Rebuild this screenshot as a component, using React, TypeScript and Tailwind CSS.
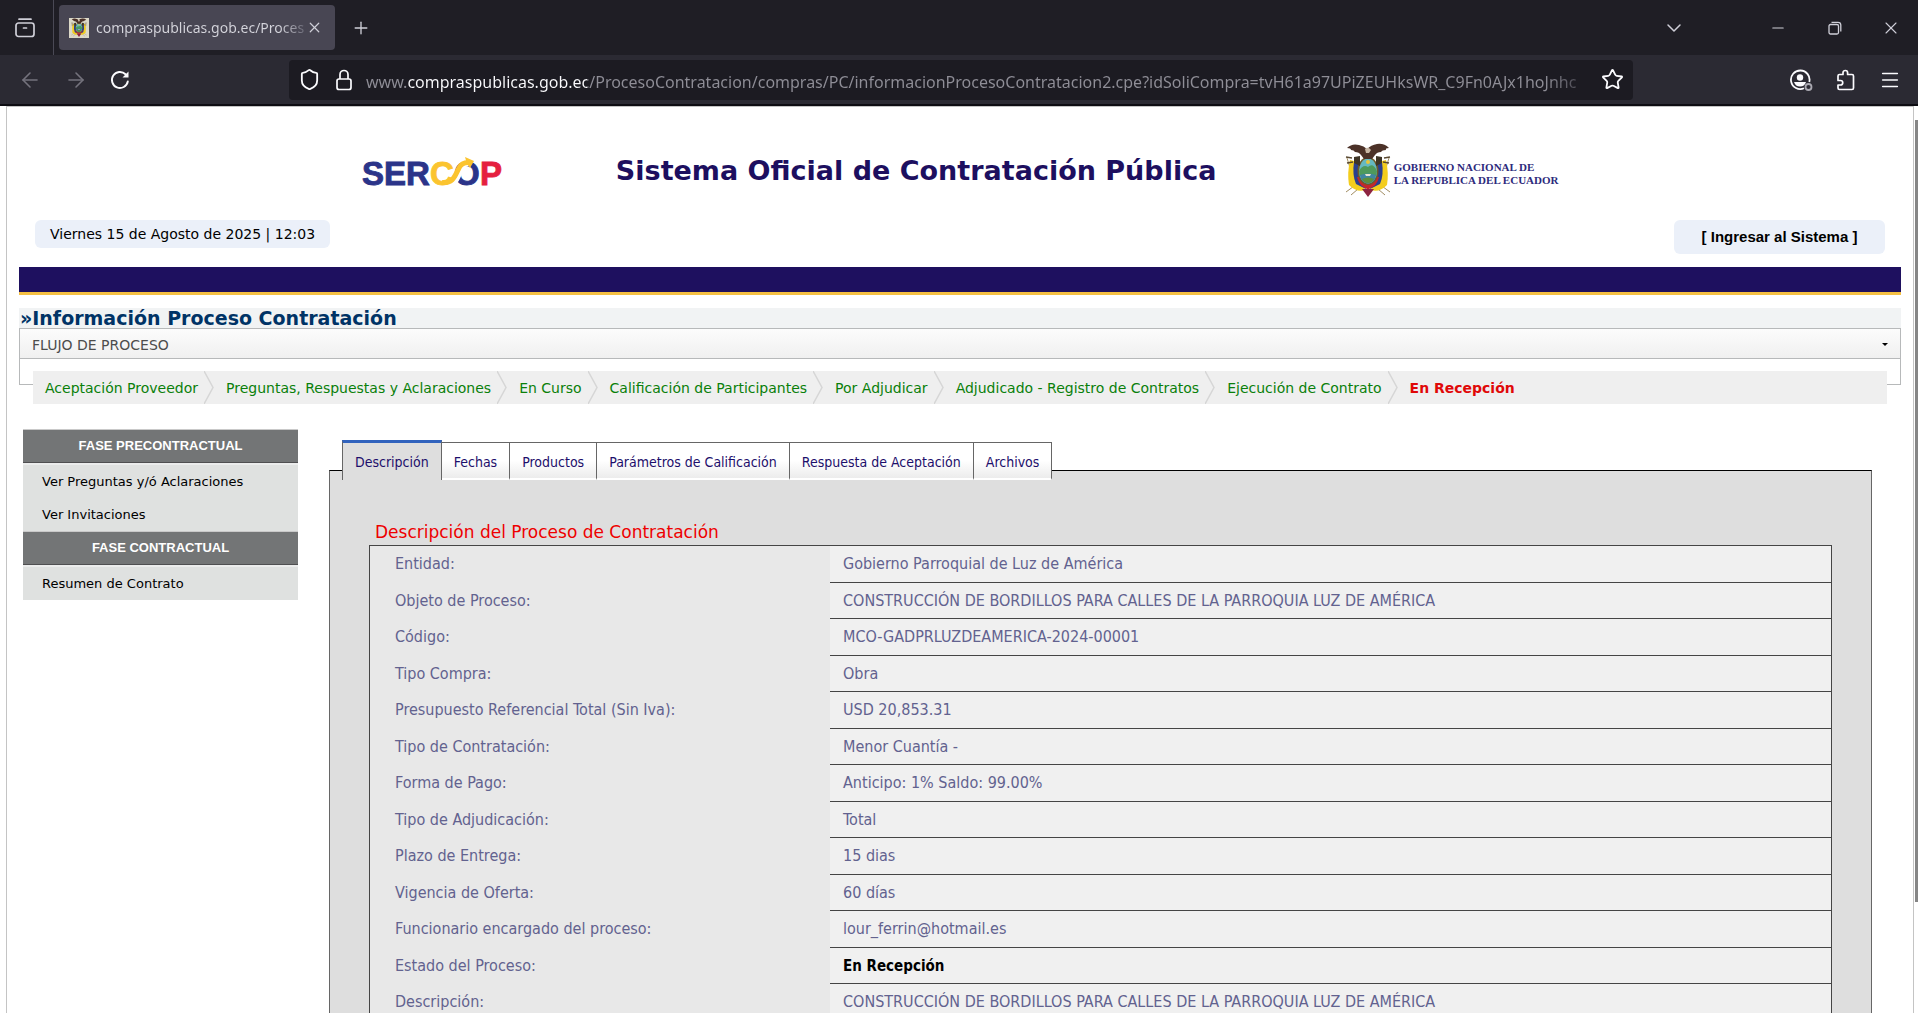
import { useState } from "react";
import { ArrowLeft, ArrowRight, ChevronDown, Menu, Minus, Plus, Shield, Star, X } from "lucide-react";

const steps = [
  "Aceptación Proveedor",
  "Preguntas, Respuestas y Aclaraciones",
  "En Curso",
  "Calificación de Participantes",
  "Por Adjudicar",
  "Adjudicado - Registro de Contratos",
  "Ejecución de Contrato",
];

const phases = [
  { title: "FASE PRECONTRACTUAL", links: ["Ver Preguntas y/ó Aclaraciones", "Ver Invitaciones"] },
  { title: "FASE CONTRACTUAL", links: ["Resumen de Contrato"] },
];

const tabs = [
  "Descripción",
  "Fechas",
  "Productos",
  "Parámetros de Calificación",
  "Respuesta de Aceptación",
  "Archivos",
];

const rows = [
  { label: "Entidad:", value: "Gobierno Parroquial de Luz de América" },
  { label: "Objeto de Proceso:", value: "CONSTRUCCIÓN DE BORDILLOS PARA CALLES DE LA PARROQUIA LUZ DE AMÉRICA" },
  { label: "Código:", value: "MCO-GADPRLUZDEAMERICA-2024-00001" },
  { label: "Tipo Compra:", value: "Obra" },
  { label: "Presupuesto Referencial Total (Sin Iva):", value: "USD 20,853.31" },
  { label: "Tipo de Contratación:", value: "Menor Cuantía -" },
  { label: "Forma de Pago:", value: "Anticipo: 1% Saldo: 99.00%" },
  { label: "Tipo de Adjudicación:", value: "Total" },
  { label: "Plazo de Entrega:", value: "15 dias" },
  { label: "Vigencia de Oferta:", value: "60 días" },
  { label: "Funcionario encargado del proceso:", value: "lour_ferrin@hotmail.es" },
  { label: "Estado del Proceso:", value: "En Recepción", bold: true },
  { label: "Descripción:", value: "CONSTRUCCIÓN DE BORDILLOS PARA CALLES DE LA PARROQUIA LUZ DE AMÉRICA" },
];

function CoatOfArms({ className }: { className: string }) {
  return (
    <svg viewBox="0 0 46 54" className={className} aria-hidden="true">
      {/* spears */}
      <path d="M2 15 L12 47 M44 15 L34 47 M1 49 L16 38 M45 49 L30 38 M6 52 L20 40 M40 52 L26 40" stroke="#a08c62" strokeWidth="1" fill="none" />
      {/* flags */}
      <path d="M5 17 Q2 30 4 42 Q12 50 20 47 L17 20 Z" fill="#f3cd1d" />
      <path d="M41 17 Q44 30 42 42 Q34 50 26 47 L29 20 Z" fill="#f3cd1d" />
      <path d="M9 19 Q7 32 11 41 L21 46 L19 22 Z" fill="#2a3f8e" />
      <path d="M37 19 Q39 32 35 41 L25 46 L27 22 Z" fill="#2a3f8e" />
      <path d="M12 34 Q14 43 22 46 L23 53 L24 46 Q32 43 34 34 Z" fill="#c5262b" />
      <path d="M17 46 L23 54 L29 46 Z" fill="#8d2440" />
      {/* shield */}
      <ellipse cx="23" cy="28" rx="10.5" ry="14" fill="#6d5b2a" />
      <ellipse cx="23" cy="28" rx="9" ry="12.5" fill="#65b9c2" />
      <path d="M14 28 Q18 21 23 24 Q28 19 32 28 L31 33 L15 33 Z" fill="#4e9a5c" />
      <path d="M15 32 Q23 29 31 32 Q30 40 23 40.500 Q16 40 15 32 Z" fill="#3f86a0" />
      <path d="M17 36 Q23 33 29 36 Q27 40 23 40 Q19 40 17 36 Z" fill="#5c8f3c" />
      <path d="M20 31 L26 31 L25 33 L21 33 Z" fill="#e8e3d2" />
      <circle cx="23" cy="19" r="2" fill="#e9c73c" />
      {/* condor */}
      <path d="M2 5 Q7 0 14 2 Q19 3 22 6 Q26 2 32 1 Q39 0 44 5 Q40 5 41 7 Q37 7 36 9 Q32 9 30 12 L27 16 L19 16 L16 12 Q14 9 10 9 Q9 7 6 7 Q6 5 2 5 Z" fill="#4c3228" />
      <path d="M20 6 Q23 3 26 7 L24 10 L21 10 Z" fill="#c9b8a6" />
      {/* laurel */}
      <path d="M7 15 L1 14 M8 19 L2 20 M39 15 L45 14 M38 19 L44 20" stroke="#5a4a33" strokeWidth="1.500" />
      <path d="M9 14 L15 13 L15 23 L9 20 Z M37 14 L31 13 L31 23 L37 20 Z" fill="#3f3526" />
    </svg>
  );
}

function SercopLogo() {
  return (
    <svg viewBox="0 0 142 44" className="mt-1 h-[44px] w-[142px]" role="img" aria-label="SERCOP">
      <g fontFamily="Liberation Sans, Arial, sans-serif" fontWeight="700" fontSize="33" strokeWidth="0.9">
        <text x="0" y="35" fill="#2b3489" stroke="#2b3489">SER</text>
        <text x="68" y="35" fill="#fbc42f" stroke="#fbc42f">C</text>
        <text x="92" y="35" fill="#2b3489" stroke="#2b3489">O</text>
        <text x="118" y="35" fill="#e5203f" stroke="#e5203f">P</text>
      </g>
      {/* arrow that ties the two round letters together */}
      <path d="M92 32 C96 29 97 21 100 17 C102 14 104 13 107 13" stroke="#fff" strokeWidth="6" fill="none" />
      <path d="M80 32.500 C92 33.500 93 25 97 18 C99 14 102 12.500 106 12.500" stroke="#fbc42f" strokeWidth="5" fill="none" />
      <path d="M103 7 L112 11 L108 18 L105 14 Z" fill="#fbc42f" />
    </svg>
  );
}

function BrowserChrome() {
  return (
    <header className="shrink-0 font-['Noto_Sans',sans-serif] text-[#fbfbfe]">
      <div className="flex h-[55px] items-center bg-[#1f1e25] text-[#cfcfd8]">
        <button aria-label="Pestañas" className="flex h-full w-[54px] items-center border-r border-[#4a4955] pl-[14px]">
          <svg viewBox="0 0 22 22" className="size-[22px]" fill="none" stroke="currentColor" strokeWidth="1.700" strokeLinecap="round">
            <rect x="2" y="6" width="18" height="13.500" rx="2.500" />
            <path d="M5 2.200 H17 M9.500 11 H12.500" />
          </svg>
        </button>
        <div className="ml-[5px] flex h-[45px] w-[276px] items-center rounded bg-[#484653] pl-[10px]">
          <span className="flex size-5 items-center justify-center bg-[#dcd9c8]">
            <CoatOfArms className="h-[19px] w-4" />
          </span>
          <span className="ml-[7px] w-[208px] overflow-hidden bg-[linear-gradient(to_right,#d5d5dc_88%,#6c6b78)] bg-clip-text text-sm whitespace-nowrap text-transparent">
            compraspublicas.gob.ec/Proces
          </span>
          <button aria-label="Cerrar pestaña" className="ml-[2px]">
            <X className="size-[17px]" strokeWidth={1.7} />
          </button>
        </div>
        <button aria-label="Nueva pestaña" className="ml-4">
          <Plus className="size-5" strokeWidth={1.6} />
        </button>
        <button aria-label="Listar pestañas" className="mr-16 ml-auto">
          <ChevronDown className="size-6" strokeWidth={1.5} />
        </button>
        <button aria-label="Minimizar" className="flex w-14 justify-center">
          <Minus className="size-[18px]" strokeWidth={1.4} />
        </button>
        <button aria-label="Restaurar" className="flex w-[58px] justify-center">
          <svg viewBox="0 0 14 14" className="size-[14px]" fill="none" stroke="currentColor" strokeWidth="1.300">
            <rect x="1" y="3.500" width="9.500" height="9.500" rx="1.500" />
            <path d="M3.500 1.300 H10 Q12.800 1.300 12.800 4 V10.500" />
          </svg>
        </button>
        <button aria-label="Cerrar" className="flex w-[54px] justify-center">
          <X className="size-5" strokeWidth={1.3} />
        </button>
      </div>

      <div className="flex h-[51px] items-center border-b-2 border-[#0d0c12] bg-[#2b2a33]">
        <div className="flex w-[289px] items-center gap-[22px] pl-[18px]">
          <button aria-label="Atrás" className="text-[#74737d]">
            <ArrowLeft className="size-6" strokeWidth={1.6} />
          </button>
          <button aria-label="Adelante" className="text-[#74737d]">
            <ArrowRight className="size-6" strokeWidth={1.6} />
          </button>
          <button aria-label="Recargar">
            <svg viewBox="0 0 20 20" className="size-5" fill="none" stroke="currentColor" strokeWidth="1.900" strokeLinecap="round">
              <path d="M17.800 11.500 A8 8 0 1 1 15.500 4.200 L17 5.700" />
              <path d="M18.500 1.500 V7.500 H12.500 Z" fill="currentColor" stroke="none" />
            </svg>
          </button>
        </div>
        <div className="flex h-10 flex-1 items-center rounded bg-[#1c1b22]">
          <Shield className="ml-[9px] size-[23px]" strokeWidth={1.9} />
          <svg viewBox="0 0 18 22" className="ml-[14px] h-[22px] w-[18px]" fill="none" stroke="currentColor" strokeWidth="1.700">
            <rect x="2" y="10" width="14" height="10.500" rx="2" />
            <path d="M5 10 V5.500 A4 4 0 0 1 13 5.500 V10" />
          </svg>
          <input
            aria-label="Dirección"
            readOnly
            className="ml-[13px] min-w-0 flex-1 bg-[linear-gradient(to_right,#8f8e97_40px,#fbfbfe_40px,#fbfbfe_221px,#8f8e97_221px,#8f8e97_96%,#2b2a33)] bg-clip-text pt-1 text-base text-transparent outline-none"
            value="www.compraspublicas.gob.ec/ProcesoContratacion/compras/PC/informacionProcesoContratacion2.cpe?idSoliCompra=tvH61a97UPiZEUHksWR_C9Fn0AJx1hoJnhc"
          />
          <button aria-label="Marcador" className="mr-[9px] ml-2">
            <Star className="size-[23px]" strokeWidth={1.9} />
          </button>
        </div>
        <div className="flex w-[285px] items-center justify-end gap-[22px] pr-[17px]">
          <button aria-label="Cuenta">
            <svg viewBox="0 0 24 22" className="h-[22px] w-6" fill="none" stroke="currentColor" strokeWidth="1.800">
              <path d="M15 19.300 A9.300 9.300 0 1 1 20.300 13" />
              <circle cx="11" cy="8.500" r="3.200" fill="currentColor" stroke="none" />
              <path d="M5 13 H17 Q15.500 17.500 11 17.500 Q6.500 17.500 5 13 Z" fill="currentColor" stroke="none" />
              <circle cx="19.500" cy="18" r="3" stroke="#a9a8b1" />
            </svg>
          </button>
          <button aria-label="Extensiones">
            <svg viewBox="0 0 22 22" className="size-[22px]" fill="none" stroke="currentColor" strokeWidth="1.700" strokeLinejoin="round">
              <path d="M3 9 V7 Q3 5.500 4.500 5.500 H8 V3.800 A2.300 2.300 0 0 1 12.600 3.800 V5.500 H17 Q18.500 5.500 18.500 7 V19 Q18.500 20.500 17 20.500 H4.500 Q3 20.500 3 19 V16 H5.500 A2.200 2.200 0 0 0 5.500 11.500 H3 Z" />
            </svg>
          </button>
          <button aria-label="Menú">
            <Menu className="size-[22px]" strokeWidth={1.7} />
          </button>
        </div>
      </div>
    </header>
  );
}

export default function App() {
  const [active, setActive] = useState("Descripción");
  const [open, setOpen] = useState(true);

  return (
    <div className="flex h-screen flex-col overflow-hidden bg-white font-['DejaVu_Sans',Verdana,sans-serif]">
      <BrowserChrome />

      <div className="relative min-h-0 flex-1 overflow-hidden pr-1 pl-[6px]">
        <div className="absolute top-[14px] right-0 h-[782px] w-[3px] bg-[#858585]" />

        <div className="min-h-full border border-[#c4c4c4] px-3">
          <div className="flex h-[113px] items-center justify-between px-[18.2%] pt-3">
            <SercopLogo />
            <h1 className="mt-1 mr-4 text-[27px] font-bold whitespace-nowrap text-[#1d0f5f]">
              Sistema Oficial de Contratación Pública
            </h1>
            <div className="flex items-center gap-[3px]">
              <CoatOfArms className="h-[54px] w-[46px]" />
              <p className="pt-2 font-['Liberation_Serif',serif] text-[11px] leading-[13px] font-bold whitespace-nowrap text-[#2d2a7c]">
                GOBIERNO NACIONAL DE
                <br />
                LA REPUBLICA DEL ECUADOR
              </p>
            </div>
          </div>

          <div className="flex h-[47px] items-start justify-between px-4">
            <p className="rounded-md bg-[#ebf0f9] px-[15px] text-sm leading-7">Viernes 15 de Agosto de 2025 | 12:03</p>
            <a href="#" className="w-[211px] rounded-md bg-[#ebf0f9] text-center font-['Liberation_Sans',Arial,sans-serif] text-[15px] leading-[34px] font-bold">
              [ Ingresar al Sistema ]
            </a>
          </div>

          <div className="h-7 border-b-[3px] border-[#f5c043] bg-[#1e105f]" />

          <h2 className="mt-[13px] bg-[#f1f3f4] pl-px text-[19px] leading-5 font-bold text-[#003366]">
            »Información Proceso Contratación
          </h2>

          <button
            onClick={() => setOpen(!open)}
            className="flex h-[31px] w-full items-center justify-between border border-[#b7b9ba] bg-linear-to-b from-[#fcfcfc] to-[#f0f0f0] px-3 pt-0.5 text-sm text-[#4d4d4d]"
          >
            FLUJO DE PROCESO
            <svg viewBox="0 0 6 3" className="h-[3px] w-[6px]">
              <path d="M0 0 H6 L3 3 Z" fill="#000" />
            </svg>
          </button>
          {open && (
            <div className="h-[26px] border-x border-b border-[#b7b9ba] px-[13px] pt-3">
              <nav className="relative flex h-[33px] items-center bg-[#efefef] pl-3 text-sm whitespace-nowrap text-[#0a800a]">
                {steps.map((step) => (
                  <span key={step} className="flex items-center">
                    <a href="#">{step}</a>
                    <svg viewBox="0 0 10 33" className="mr-3 ml-[6px] h-[33px] w-[10px]" fill="none" stroke="#d6d6d6" strokeWidth="1.500">
                      <path d="M0 0 L9 16.500 L0 33" />
                    </svg>
                  </span>
                ))}
                <a href="#" className="font-bold text-[#e00808]">
                  En Recepción
                </a>
              </nav>
            </div>
          )}

          <div className="mt-11 flex items-start">
            <aside className="ml-1 w-[275px] shrink-0">
              {phases.map((phase) => (
                <section key={phase.title}>
                  <h3 className="h-[34px] border-t border-b border-t-[#c9c9c9] border-b-[#4f4f51] bg-[#737576] text-center font-['Liberation_Sans',Arial,sans-serif] text-[13px] leading-8 font-bold text-white">
                    {phase.title}
                  </h3>
                  <ul className="border-t-2 border-[#ebecec] bg-[#dfe1e0]">
                    {phase.links.map((link) => (
                      <li key={link} className="h-[33px] pl-[19px] text-[13px] leading-[33px]">
                        <a href="#">{link}</a>
                      </li>
                    ))}
                  </ul>
                </section>
              ))}
            </aside>

            <main className="mt-[11px] mr-[29px] ml-[31px] flex-1">
              <div role="tablist" className="relative z-10 -mb-[10px] flex items-end pl-[13px] font-['DejaVu_Sans_Condensed',Tahoma,sans-serif] text-sm text-[#1d0f6b]">
                {tabs.map((tab) => (
                  <button
                    key={tab}
                    role="tab"
                    aria-selected={tab === active}
                    onClick={() => setActive(tab)}
                    className={
                      tab === active
                        ? "h-10 border-x border-t-[3px] border-x-[#666] border-t-[#3163bd] bg-[#dedede] px-3"
                        : "h-[38px] border-t border-r border-b-2 border-t-[#666] border-r-[#666] border-b-white bg-linear-to-b from-white from-50% to-[#ececec] px-3 pt-0.5"
                    }
                  >
                    {tab}
                  </button>
                ))}
              </div>

              <div className="border-x border-t border-x-[#666] border-t-black bg-[#dedede] px-[39px] pt-12 pb-10">
                <h2 className="pl-[6px] text-[17px] leading-[26px] text-[#ee0000]">
                  Descripción del Proceso de Contratación
                </h2>
                <table className="w-full border-collapse border border-[#454545] font-['DejaVu_Sans_Condensed',sans-serif] text-base text-[#62628f]">
                  <tbody>
                    {rows.map((row) => (
                      <tr key={row.label} className="odd:h-[37px] even:h-9">
                        <th scope="row" className="w-[31.5%] bg-[#e8e8e8] pl-[25px] text-left leading-5 font-normal">
                          {row.label}
                        </th>
                        <td className={row.bold ? "border-b border-[#454545] bg-[#f0f0f0] pl-[13px] text-[15px] leading-5 font-bold text-black" : "border-b border-[#454545] bg-[#f0f0f0] pl-[13px] leading-5"}>
                          {row.value}
                        </td>
                      </tr>
                    ))}
                  </tbody>
                </table>
              </div>
            </main>
          </div>
        </div>
      </div>
    </div>
  );
}
